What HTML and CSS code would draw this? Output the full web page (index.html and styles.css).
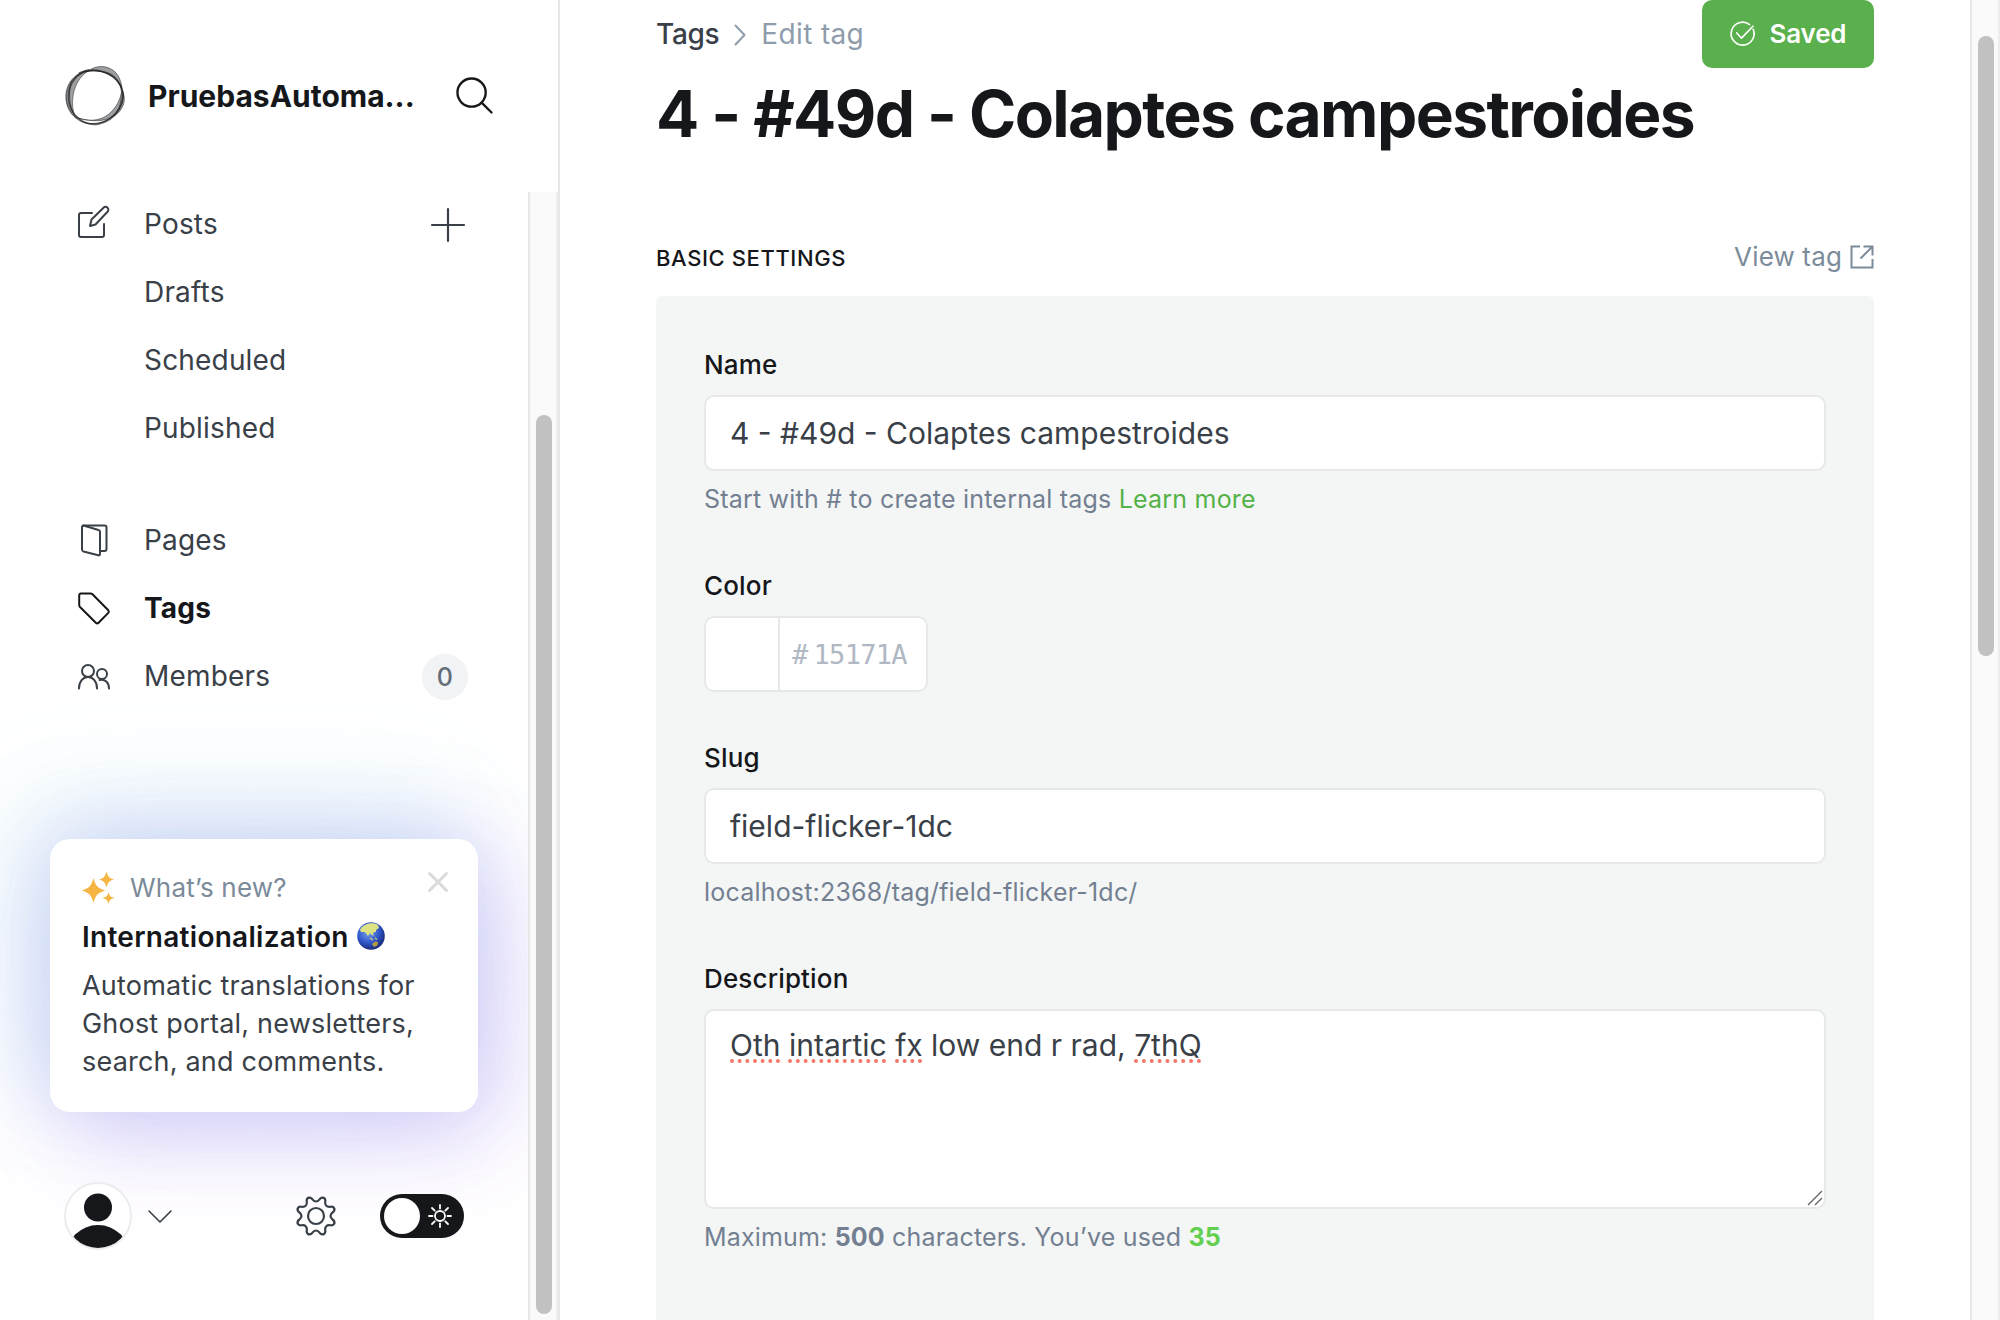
FILE: index.html
```html
<!DOCTYPE html>
<html lang="en">
<head>
<meta charset="utf-8">
<title>Edit tag</title>
<link rel="stylesheet" href="styles.css">
</head>
<body>
<div class="app">
  <aside class="sidebar">
    <header class="site">
      <svg class="site-logo" viewBox="0 0 61 60" fill="none" stroke="#15171a">
        <path fill="#15171a" fill-opacity=".42" fill-rule="evenodd" stroke-width=".8" stroke-opacity=".6" d="M25 4C34-3 56-1 57 24 66 40 49 64 10 51-6 36 1 8 25 4zM25 4C40 5 52 10 57 24 54 43 38 62 10 51 4 35 9 12 25 4z"/>
        <path stroke-width="1" stroke-opacity=".6" d="M18 6C38 2 54 9 58 27 60 42 45 58 28 58 12 58 2 46 1 33 0 20 7 8 24 3.500"/>
        <path stroke-width="1.800" stroke-opacity=".6" d="M14 7C27 1 47 4 56 20 62 34 53 54 33 58 17 60 5 48 3.500 33 3 20 8 11 20 5"/>
        <path stroke-width="1" stroke-opacity=".5" d="M6 16C14 4 33 2 46 8 58 15 58 30 54 42 46 55 33 59 22 57 9 54 1 40 6 16z"/>
      </svg>
      <span class="site-name">PruebasAutoma...</span>
      <svg class="search" viewBox="0 0 38 38" fill="none" stroke="#15171a" stroke-width="2.400" stroke-linecap="round"><circle cx="16" cy="16" r="14.500"/><path d="M26.300 26.300 36.500 36.500"/></svg>
    </header>
    <div class="nav-scroll">
      <div class="nav-pane">
        <nav class="nav">
          <a class="nav-item">
            <svg class="nav-icon icon-post" viewBox="0 0 32 32" fill="none" stroke="currentColor" stroke-width="2" stroke-linejoin="round" stroke-linecap="round"><path d="M14 7H3a2 2 0 0 0-2 2v20a2 2 0 0 0 2 2h21a2 2 0 0 0 2-2V18"/><path d="M12 20l1.500-6.500L25.500 1.700a2.800 2.800 0 0 1 4 0 2.800 2.800 0 0 1 0 4L17.500 18.500z"/></svg>
            <span>Posts</span>
            <svg class="plus" viewBox="0 0 34 34" stroke="currentColor" stroke-width="2.200" stroke-linecap="round"><path d="M17 1v32M1 17h32"/></svg>
          </a>
          <a class="nav-item nav-sub">Drafts</a>
          <a class="nav-item nav-sub">Scheduled</a>
          <a class="nav-item nav-sub">Published</a>
        </nav>
        <nav class="nav">
          <a class="nav-item">
            <svg class="nav-icon" viewBox="0 0 32 32" fill="none" stroke="currentColor" stroke-width="2" stroke-linejoin="round" stroke-linecap="round"><path d="M23 27h3.500a2 2 0 0 0 2-2V3.500a2 2 0 0 0-2-2H5.500"/><path d="M5.500 1.500 20.500 6a2 2 0 0 1 1.500 2V30a1.300 1.300 0 0 1-1.700 1.300L5.500 27.500A2.500 2.500 0 0 1 4 25.500V3A1.500 1.500 0 0 1 5.500 1.500z"/></svg>
            <span>Pages</span>
          </a>
          <a class="nav-item nav-active">
            <svg class="nav-icon" viewBox="0 0 32 32" fill="none" stroke="currentColor" stroke-width="2" stroke-linejoin="round" stroke-linecap="round"><path d="M3 1.500h9.500a3 3 0 0 1 2 .8L30.300 18.300a2 2 0 0 1 0 2.600L20.600 30.700a2 2 0 0 1-2.800 0L2 15A3 3 0 0 1 1.200 13V3.500a2 2 0 0 1 1.800-2z"/></svg>
            <span>Tags</span>
          </a>
          <a class="nav-item">
            <svg class="nav-icon" viewBox="0 0 32 32" fill="none" stroke="currentColor" stroke-width="2" stroke-linecap="round"><circle cx="10" cy="11" r="6"/><path d="M1 28.500c0-7 4-11.500 9-11.500s9 4.500 9 11.500"/><circle cx="24" cy="14" r="5"/><path d="M21.500 20c5.500-1.500 9.500 2.500 9.500 8.500"/></svg>
            <span>Members</span>
            <span class="count">0</span>
          </a>
        </nav>
        <section class="news">
          <div class="news-head">
            <svg class="sparkles" viewBox="0 0 32 32" fill="#f6b443"><path d="M11.500 6C13.500 14 16 16.500 23.500 18.500 16 20.500 13.500 23 11.500 31 9.500 23 7 20.500-.5 18.500 7 16.500 9.500 14 11.500 6z"/><path d="M24.500-.5C26 5 27.500 6.300 32 7.500 27.500 8.700 26 10 24.500 15.500 23 10 21.500 8.700 17 7.500 21.500 6.300 23 5 24.500-.5z"/><path d="M26.500 20c1 4 2 5 6 6-4 1-5 2-6 6-1-4-2-5-6-6 4-1 5-2 6-6z"/></svg>
            <span class="news-label">What’s new?</span>
            <svg class="close" viewBox="0 0 20 20" stroke="#dadada" stroke-width="3" stroke-linecap="round"><path d="M1.500 1.500l17 17M18.500 1.500l-17 17"/></svg>
          </div>
          <h4 class="news-title">Internationalization
            <svg class="globe" viewBox="0 0 28 28"><defs><radialGradient id="sea" cx=".4" cy=".35" r=".65"><stop offset="0" stop-color="#7fa5e6"/><stop offset=".6" stop-color="#3158cc"/><stop offset="1" stop-color="#1b2c7c"/></radialGradient></defs><circle cx="14" cy="14" r="13.800" fill="url(#sea)"/><path d="M4 6C8 1 17 0 21 3l1 3-3 2v2l-2 0-1 2 1 2-2-1-2-2-2 3-3-4-4 0-1-2z" fill="#dde283"/><path d="M15 22l3-2.500 3 .5-.5 3.500-3.500 1.500z" fill="#b59a45"/><path d="M13 16l3 2M18 16l2 1.500" stroke="#d0c977" stroke-width="1.300"/></svg>
          </h4>
          <p class="news-text">Automatic translations for<br>Ghost portal, newsletters,<br>search, and comments.</p>
        </section>
        <footer class="footer">
          <svg class="avatar" viewBox="0 0 68 68"><defs><clipPath id="disc"><circle cx="34" cy="34" r="32"/></clipPath></defs><circle cx="34" cy="34" r="33" fill="#fff" stroke="#ececef" stroke-width="2"/><g clip-path="url(#disc)" fill="#15171a"><circle cx="34" cy="25.500" r="14"/><circle cx="34" cy="75" r="32"/></g></svg>
          <svg class="chevron" viewBox="0 0 24 14" fill="none" stroke="#394047" stroke-width="1.600" stroke-linecap="round" stroke-linejoin="round"><path d="M1 2l11 11L23 2"/></svg>
          <svg class="gear" viewBox="-20 -20 40 40" fill="none" stroke="#394047" stroke-width="2.200">
            <defs><path id="cog" stroke-linecap="round" d="M-7.500-18.200C-3.400-19.900-4.400-14.500 0-14.500S3.400-19.900 7.500-18.200"/></defs>
            <use href="#cog"/><use href="#cog" transform="rotate(45)"/><use href="#cog" transform="rotate(90)"/><use href="#cog" transform="rotate(135)"/><use href="#cog" transform="rotate(180)"/><use href="#cog" transform="rotate(225)"/><use href="#cog" transform="rotate(270)"/><use href="#cog" transform="rotate(315)"/>
            <circle r="8"/></svg>
          <div class="toggle"><span class="knob"></span><svg class="sun" viewBox="0 0 24 24" fill="none" stroke="#fff" stroke-width="1.800" stroke-linecap="round"><circle cx="12" cy="12" r="5"/><path d="M12 1v3.500M12 19.500V23M1 12h3.500M19.500 12H23M4 4l2.700 2.700M17.300 17.300 20 20M20 4l-2.700 2.700M6.700 17.300 4 20"/></svg></div>
        </footer>
      </div>
      <div class="track track-side"><span class="thumb thumb-side"></span></div>
    </div>
  </aside>
  <main class="main">
    <div class="topbar">
      <div class="crumbs"><span class="crumb-link">Tags</span><svg class="crumb-sep" viewBox="0 0 12 22" fill="none" stroke="#8e9cac" stroke-width="2" stroke-linecap="round" stroke-linejoin="round"><path d="M1.500 1.500l9 9.500-9 9.500"/></svg><span class="crumb-here">Edit tag</span></div>
      <button class="save"><svg class="save-icon" viewBox="0 0 24 24" fill="none" stroke="#fff" stroke-width="1.600" stroke-linecap="round" stroke-linejoin="round"><path d="M22.300 8A11 11 0 1 1 18.800 3.400"/><path d="M6.500 11.500l4.500 5L22 5"/></svg><span>Saved</span></button>
    </div>
    <h1 class="title">4 - #49d - Colaptes campestroides</h1>
    <div class="section-head">
      <h2 class="section-title">BASIC SETTINGS</h2>
      <a class="view"><span class="view-text">View tag</span><svg class="view-icon" viewBox="0 0 24 24" fill="none" stroke="#7c8b9a" stroke-width="2"><path d="M10 1.500H1.500v21h21V14"/><path d="M10.500 13.500 22 2M13.500 1.500h9v9"/></svg></a>
    </div>
    <form class="panel">
      <div class="field field-name">
        <label class="label">Name</label>
        <div class="input"><span>4 - #49d - Colaptes campestroides</span></div>
        <p class="hint"><span>Start with # to create internal tags </span><a class="link">Learn more</a></p>
      </div>
      <div class="field field-color">
        <label class="label">Color</label>
        <div class="color"><span class="swatch"></span><span class="hash">#</span><span class="hex">15171A</span></div>
      </div>
      <div class="field field-slug">
        <label class="label">Slug</label>
        <div class="input"><span>field-flicker-1dc</span></div>
        <p class="hint">localhost:2368/tag/field-flicker-1dc/</p>
      </div>
      <div class="field">
        <label class="label">Description</label>
        <div class="input area"><span><u class="typo">Oth</u> <u class="typo">intartic</u> <u class="typo">fx</u> low end r rad, <u class="typo">7thQ</u></span>
          <svg class="grip" viewBox="0 0 14 14" stroke="#666" stroke-width="1.400"><path d="M0 14 14 0M7 14l7-7"/></svg></div>
        <p class="hint hint-last">Maximum: <b>500</b> characters. You’ve used <b class="used">35</b></p>
      </div>
    </form>
  </main>
  <div class="track track-main"><span class="thumb thumb-main"></span></div>
</div>
</body>
</html>
```
FILE: styles.css
```css
* { box-sizing: border-box; margin: 0; padding: 0; }
body { width: 2000px; height: 1320px; overflow: hidden; background: #fff; font-family: Inter, "Liberation Sans", sans-serif; font-size: 28px; color: #394047; }
svg { display: block; flex: none; overflow: visible; }
.app { display: flex; height: 1320px; }

.sidebar { width: 560px; border-right: 2px solid #e6e6e6; display: flex; flex-direction: column; flex: none; }
.site { height: 192px; padding: 0 66px 0 65px; display: flex; align-items: center; }
.site-logo { width: 61px; height: 60px; }
.site-name { margin-left: 22px; font-size: 30px; font-weight: 700; color: #15171a; white-space: nowrap; width: 268px; }
.search { width: 37px; height: 37px; margin: 0 0 1px 41px; }

.nav-scroll { flex: 1; display: flex; min-height: 0; }
.nav-pane { width: 528px; overflow: hidden; display: flex; flex-direction: column; flex: none; }
.nav { padding: 0 60px 0 78px; margin-bottom: 44px; margin-top: -2px; position: relative; z-index: 1; letter-spacing: .18px; }
.nav + .nav { margin-top: 0; }
.nav-item { height: 68px; display: flex; align-items: center; }
.nav-sub { padding-left: 66px; }
.nav-icon { width: 32px; height: 32px; margin-right: 34px; }
.icon-post { margin-bottom: 4px; }
.nav-active { color: #15171a; font-weight: 700; }
.plus { width: 34px; height: 34px; margin: 2px 3px 0 auto; }
.count { margin-left: auto; width: 46px; height: 46px; margin-top: 2px; border-radius: 50%; background: #f1f3f4; color: #626d79; font-size: 25px; font-weight: 500; display: flex; align-items: center; justify-content: center; }

.news { width: 428px; height: 273px; margin: 85px 0 0 50px; padding: 33px 30px 0 32px; border-radius: 20px; background: #fff; flex: none;
  box-shadow: -14px -16px 90px rgba(120, 170, 230, .24), -30px -34px 120px 10px rgba(120, 210, 225, .10), 12px 16px 90px rgba(135, 95, 235, .23), 24px 34px 110px 6px rgba(200, 130, 255, .10); }
.news-head { display: flex; height: 32px; }
.sparkles { width: 32px; height: 32px; }
.news-label { margin-left: 16px; line-height: 32px; font-size: 26px; letter-spacing: .2px; color: #7c8b9a; }
.close { width: 20px; height: 20px; margin: 0 0 0 auto; }
.news-title { margin-top: 15px; line-height: 36px; font-size: 28px; font-weight: 600; letter-spacing: .28px; color: #15171a; display: flex; align-items: center; }
.globe { width: 28px; height: 28px; margin: 0 0 2px 8px; }
.news-text { margin-top: 12px; line-height: 38px; font-size: 27px; letter-spacing: .2px; white-space: nowrap; }

.footer { display: flex; align-items: center; height: 68px; margin: 70px 64px 0 64px; }
.avatar { width: 68px; height: 68px; }
.chevron { width: 24px; height: 14px; margin-left: 16px; }
.gear { width: 40px; height: 40px; margin-left: 124px; }
.toggle { width: 84px; height: 44px; margin-left: 44px; padding: 0 12px 0 4px; border-radius: 22px; background: #15171a; display: flex; align-items: center; justify-content: space-between; }
.knob { width: 36px; height: 36px; border-radius: 50%; background: #fff; }
.sun { width: 24px; height: 24px; }

.track { background: #fafafa; flex: none; }
.track-side { width: 30px; border-left: 2px solid #e8e8e8; border-right: 2px solid #ededed; padding: 223px 0 0 6px; }
.thumb { display: block; width: 16px; border-radius: 8px; background: #c1c1c1; }
.thumb-side { height: 899px; }
.track-main { width: 30px; border-left: 2px solid #e8e8e8; border-right: 2px solid #ededed; padding: 36px 0 0 6px; }
.thumb-main { height: 620px; }

.main { width: 1410px; padding: 0 96px; overflow: hidden; flex: none; }
.topbar { height: 68px; display: flex; justify-content: space-between; }
.crumbs { display: flex; align-items: center; }
.crumb-link { font-weight: 500; letter-spacing: -.3px; }
.crumb-sep { width: 12px; height: 22px; margin: 2px 15px 0; }
.crumb-here { color: #8e9cac; letter-spacing: .35px; }
.save { width: 172px; height: 68px; border: 0; border-radius: 10px; padding-bottom: 1px; background: #5ab04c; color: #fff; font: 600 26px Inter, sans-serif; letter-spacing: -.2px; display: flex; align-items: center; justify-content: center; gap: 15px; }
.save-icon { width: 25px; height: 25px; }
.title { margin-top: 6px; height: 80px; line-height: 80px; font-size: 64px; font-weight: 700; letter-spacing: -1.600px; color: #15171a; white-space: nowrap; }
.section-head { margin-top: 78px; height: 50px; display: flex; justify-content: space-between; align-items: center; }
.section-title { padding-top: 2px; font-size: 22px; font-weight: 500; letter-spacing: .6px; color: #15171a; }
.view { display: flex; align-items: center; gap: 8px; color: #7c8b9a; font-size: 26px; letter-spacing: .15px; }
.view-text { padding-bottom: 2px; }
.view-icon { width: 24px; height: 24px; }
.panel { margin-top: 14px; height: 1100px; padding: 48px; border-radius: 6px; background: #f4f6f6; }
.label { display: block; height: 40px; line-height: 42px; font-size: 26px; font-weight: 500; color: #15171a; letter-spacing: .15px; }
.input { margin-top: 11px; height: 76px; border: 2px solid #e7e9e9; border-radius: 10px; background: #fff; padding: 0 24px; font-size: 30px; display: flex; align-items: center; white-space: pre; }
.hint { margin-top: 11px; height: 34px; line-height: 34px; font-size: 25px; letter-spacing: .2px; color: #738091; white-space: pre; }
.hint-last { letter-spacing: .17px; }
.link { color: #55b247; }
.field-name { height: 221px; }
.field-color { height: 172px; }
.field-slug { height: 221px; }
.color { margin-top: 11px; width: 224px; height: 76px; border: 2px solid #e7e9e9; border-radius: 10px; background: #fff; display: flex; align-items: center; color: #b0b8c3; font: 27px "DejaVu Sans Mono", monospace; letter-spacing: -.7px; }
.swatch { width: 74px; height: 72px; border-right: 2px solid #e7e9e9; }
.hash { margin-left: 12px; }
.hex { margin-left: 6px; }
.area { height: 200px; align-items: flex-start; padding-top: 16px; position: relative; }
.typo { text-decoration: underline dotted #f2776c 4px; text-underline-offset: 3px; text-decoration-skip-ink: none; }
.grip { position: absolute; right: 2px; bottom: 2px; width: 14px; height: 14px; }
.used { color: #62cf4f; }
```
